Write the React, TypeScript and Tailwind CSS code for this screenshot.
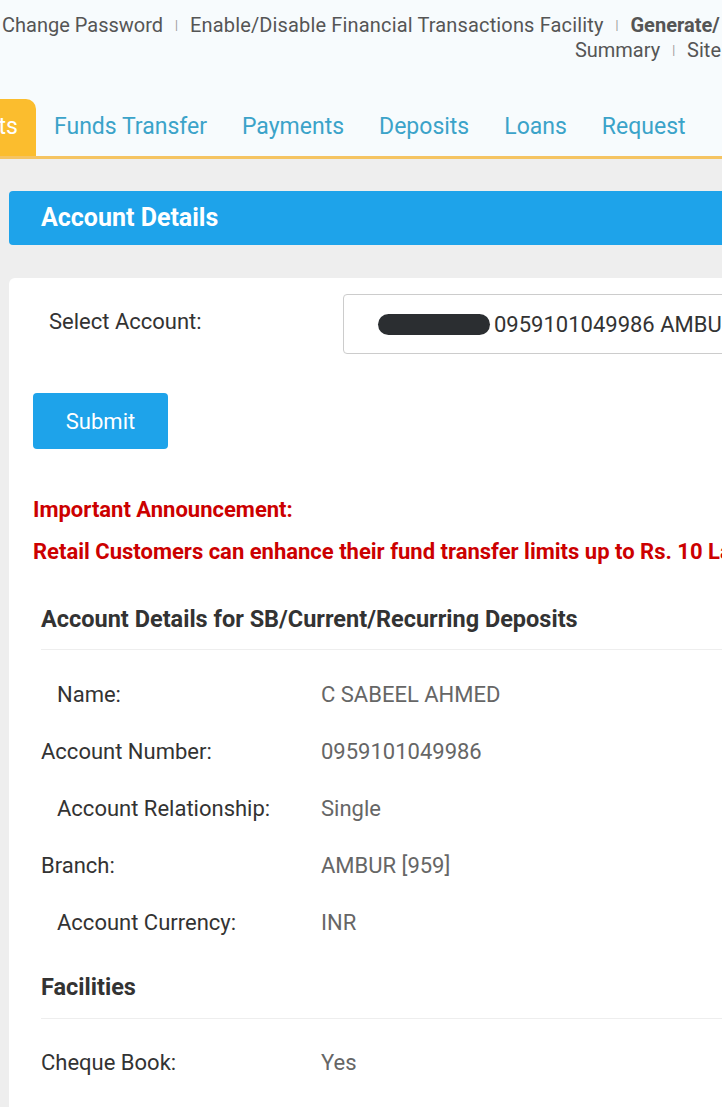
const rows = [
  { label: 'Name:', value: 'C SABEEL AHMED', indent: true },
  { label: 'Account Number:', value: '0959101049986', indent: false },
  { label: 'Account Relationship:', value: 'Single', indent: true },
  { label: 'Branch:', value: 'AMBUR [959]', indent: false },
  { label: 'Account Currency:', value: 'INR', indent: true },
]

const tabs = ['Funds Transfer', 'Payments', 'Deposits', 'Loans', 'Request']

export default function App() {
  return (
    <div className="w-[722px] h-[1107px] overflow-hidden bg-[#eeeeee] font-['Roboto',sans-serif]">
      {/* Top links + tabs */}
      <div className="bg-[#f7fbfd] pt-[12px]">
        <div className="flex items-center whitespace-nowrap text-[20px] leading-[26px] text-[#555] pl-[2px]">
          <span>Change Password</span>
          <span className="mx-[12px] text-[12px] text-[#999]">|</span>
          <span className="tracking-[0.15px]">Enable/Disable Financial Transactions Facility</span>
          <span className="mx-[12px] text-[12px] text-[#999]">|</span>
          <span className="font-bold">Generate/</span>
        </div>
        <div className="flex items-center justify-end whitespace-nowrap text-[20px] leading-[24px] text-[#555] pr-[1px]">
          <span>Summary</span>
          <span className="mx-[12px] text-[12px] text-[#999]">|</span>
          <span>Site</span>
        </div>
        <div className="mt-[37px] flex items-end border-b-[3px] border-[#f5c462] whitespace-nowrap">
          <div className="h-[57px] w-[36px] bg-[#fbbd2e] rounded-tr-[10px] flex items-center justify-end text-[23px] text-white pr-[18px] overflow-hidden">
            <span>ts</span>
          </div>
          <div className="flex items-center h-[57px] text-[23px] text-[#3ba3c9] pl-[18px] gap-[35px]">
            {tabs.map((t) => (
              <span key={t}>{t}</span>
            ))}
          </div>
        </div>
      </div>

      {/* Account Details bar */}
      <div className="mt-[32px] ml-[9px] w-[760px] h-[54px] bg-[#1ea3ea] rounded-[4px] flex items-center pl-[32px]">
        <span className="text-white font-bold text-[25px]">Account Details</span>
      </div>

      {/* Card */}
      <div className="mt-[33px] ml-[9px] w-[760px] bg-white rounded-tl-[6px] pb-[40px]">
        <div className="flex items-center pt-[16px]">
          <span className="ml-[40px] w-[294px] text-[22px] text-[#333] -mt-[6px]">Select Account:</span>
          <div className="h-[60px] flex-1 border border-[#cccccc] rounded-[4px] flex items-center pl-[34px] whitespace-nowrap">
            <span className="inline-block w-[112px] h-[21px] rounded-full bg-[#2b2e31]" />
            <span className="ml-[4px] text-[22px] text-[#333]">0959101049986 AMBUR</span>
          </div>
        </div>

        <button className="mt-[39px] ml-[24px] w-[135px] h-[56px] rounded-[4px] bg-[#1ea3ea] text-white text-[22px]">
          Submit
        </button>

        <div className="mt-[47px] ml-[24px] text-[#cc0000] font-bold text-[22px] whitespace-nowrap">
          <div className="leading-[28px]">Important Announcement:</div>
          <div className="mt-[14px] leading-[28px]">
            Retail Customers can enhance their fund transfer limits up to Rs. 10 Lakh
          </div>
        </div>

        <div className="mx-[32px] mt-[38px]">
          <h3 className="text-[23.5px] font-bold text-[#333] leading-[30px]">
            Account Details for SB/Current/Recurring Deposits
          </h3>
          <div className="mt-[15px] border-t border-[#eeeeee]" />
          <div className="flex flex-col pt-[16px]">
            {rows.map((r) => (
              <div key={r.label} className="flex items-center h-[57px] text-[22px]">
                <span className={`w-[280px] text-[#333] ${r.indent ? 'pl-[16px]' : ''}`}>{r.label}</span>
                <span className="text-[#666]">{r.value}</span>
              </div>
            ))}
          </div>

          <h3 className="mt-[21px] text-[23.5px] font-bold text-[#333] leading-[30px]">Facilities</h3>
          <div className="mt-[16px] border-t border-[#eeeeee]" />
          <div className="flex items-center h-[57px] mt-[15px] text-[22px]">
            <span className="w-[280px] text-[#333]">Cheque Book:</span>
            <span className="text-[#666]">Yes</span>
          </div>
        </div>
      </div>
    </div>
  )
}
